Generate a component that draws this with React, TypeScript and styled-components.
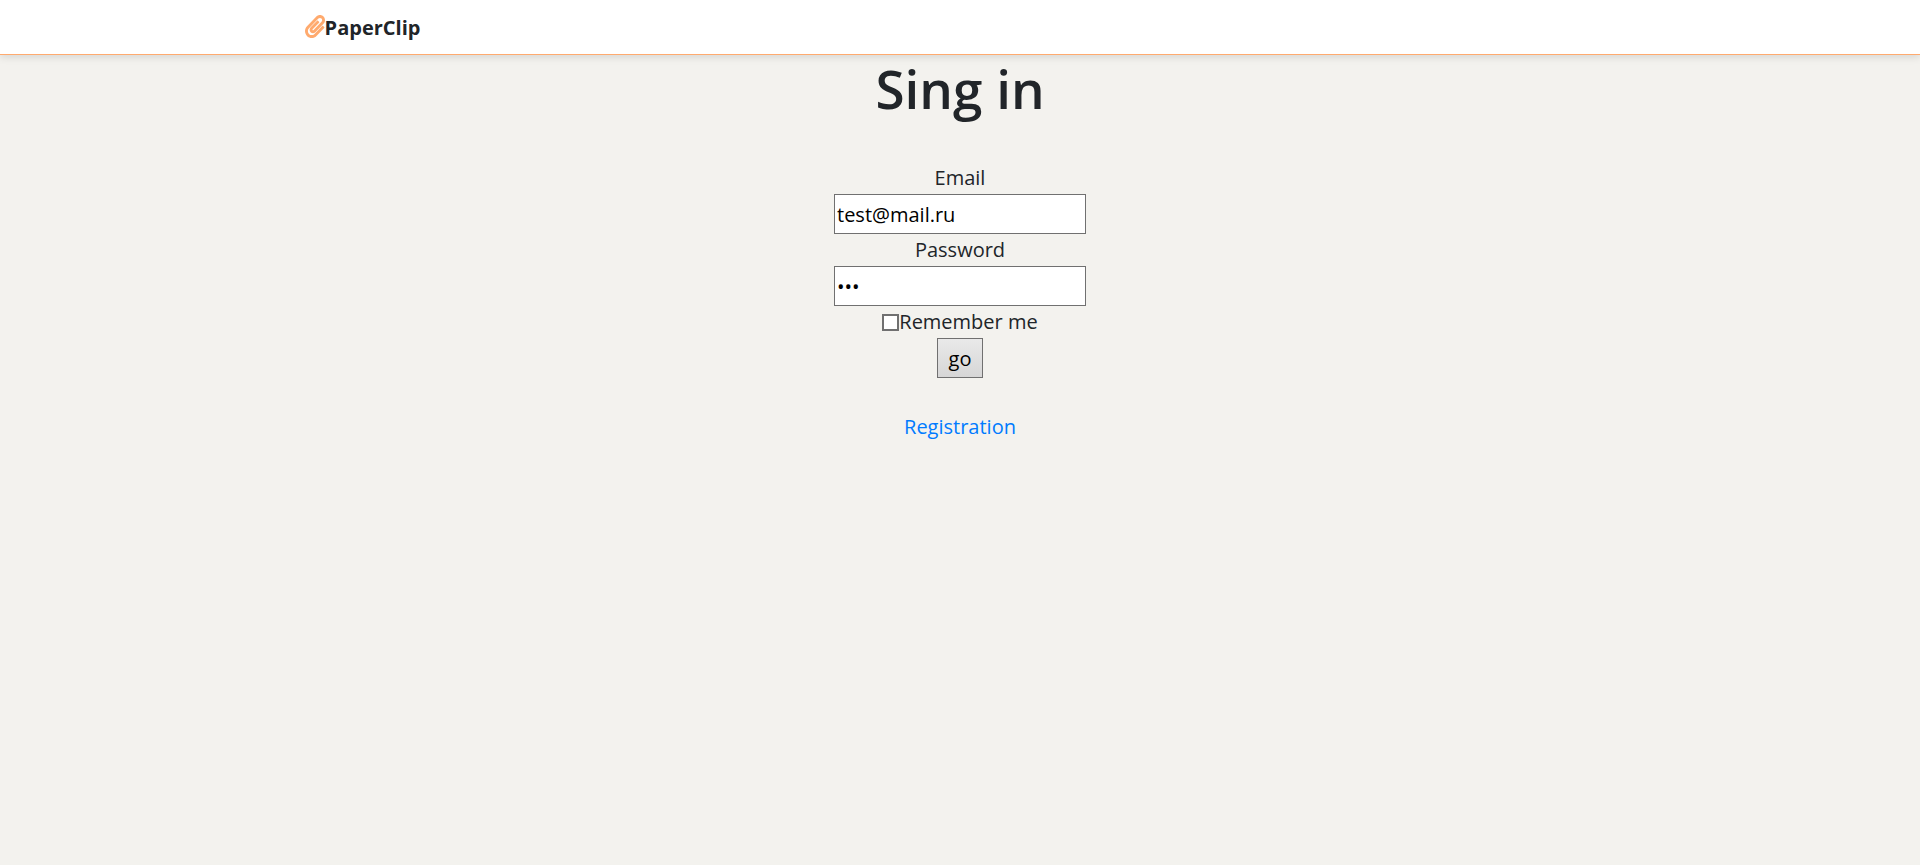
import React from 'react';
import styled, { createGlobalStyle } from 'styled-components';
import { FaPaperclip } from 'react-icons/fa';

const GlobalStyle = createGlobalStyle`
  *, *::before, *::after { box-sizing: border-box; }
  body {
    margin: 0;
    background: #f3f2ee;
    color: #212529;
    font-family: "Segoe UI", "Open Sans", "Noto Sans", sans-serif;
    font-size: 20px;
    line-height: 32px;
  }
`;

const Header = styled.header`
  background: #fff;
  border-bottom: 1px solid #ffaa6e;
  box-shadow: 0 2px 8px rgba(0, 0, 0, 0.12);
`;

const HeaderInner = styled.div`
  display: flex;
  align-items: center;
  width: 69%;
  margin: 0 auto;
  padding: 12px 7px 10px;
`;

const Brand = styled.a`
  display: flex;
  align-items: center;
  color: #212529;
  font-weight: 700;
  text-decoration: none;
`;

const ClipIcon = styled(FaPaperclip)`
  width: 20px;
  height: 23px;
  margin-bottom: 4px;
  color: #ffaa6e;
`;

const Main = styled.main`
  display: flex;
  flex-direction: column;
  align-items: center;
  padding-top: 2px;
`;

const Title = styled.h1`
  margin: 0 0 41px;
  font-size: 53px;
  font-weight: 600;
  line-height: 64px;
`;

const Form = styled.form`
  display: flex;
  flex-direction: column;
  align-items: center;
  margin-bottom: 33px;
`;

const Field = styled.label`
  display: flex;
  flex-direction: column;
  align-items: center;
`;

const TextInput = styled.input`
  width: 252px;
  height: 40px;
  padding: 2px;
  border: 1px solid #707070;
  border-radius: 0;
  background: #fff;
  color: #000;
  font: inherit;
  outline: none;
`;

const CheckLabel = styled.label`
  display: flex;
  align-items: center;
`;

const Checkbox = styled.input`
  appearance: none;
  width: 17px;
  height: 17px;
  margin: 0;
  border: 2px solid #707070;
  background: #fff;
`;

const SubmitButton = styled.button`
  width: 46px;
  height: 40px;
  padding: 2px 0 0;
  border: 1px solid #707070;
  border-radius: 0;
  background: linear-gradient(#e9e9e9, #d6d6d6);
  color: #000;
  font: inherit;
`;

const TextLink = styled.a`
  color: #007bff;
  text-decoration: none;
`;

export default function App() {
  return (
    <>
      <GlobalStyle />
      <Header>
        <HeaderInner>
          <Brand href="#">
            <ClipIcon aria-hidden="true" />
            PaperClip
          </Brand>
        </HeaderInner>
      </Header>
      <Main>
        <Title>Sing in</Title>
        <Form onSubmit={(e) => e.preventDefault()}>
          <Field>
            Email
            <TextInput type="email" name="email" defaultValue="test@mail.ru" />
          </Field>
          <Field>
            Password
            <TextInput type="password" name="password" defaultValue="123" />
          </Field>
          <CheckLabel>
            <Checkbox type="checkbox" name="remember" />
            Remember me
          </CheckLabel>
          <SubmitButton type="submit">go</SubmitButton>
        </Form>
        <TextLink href="#">Registration</TextLink>
      </Main>
    </>
  );
}
